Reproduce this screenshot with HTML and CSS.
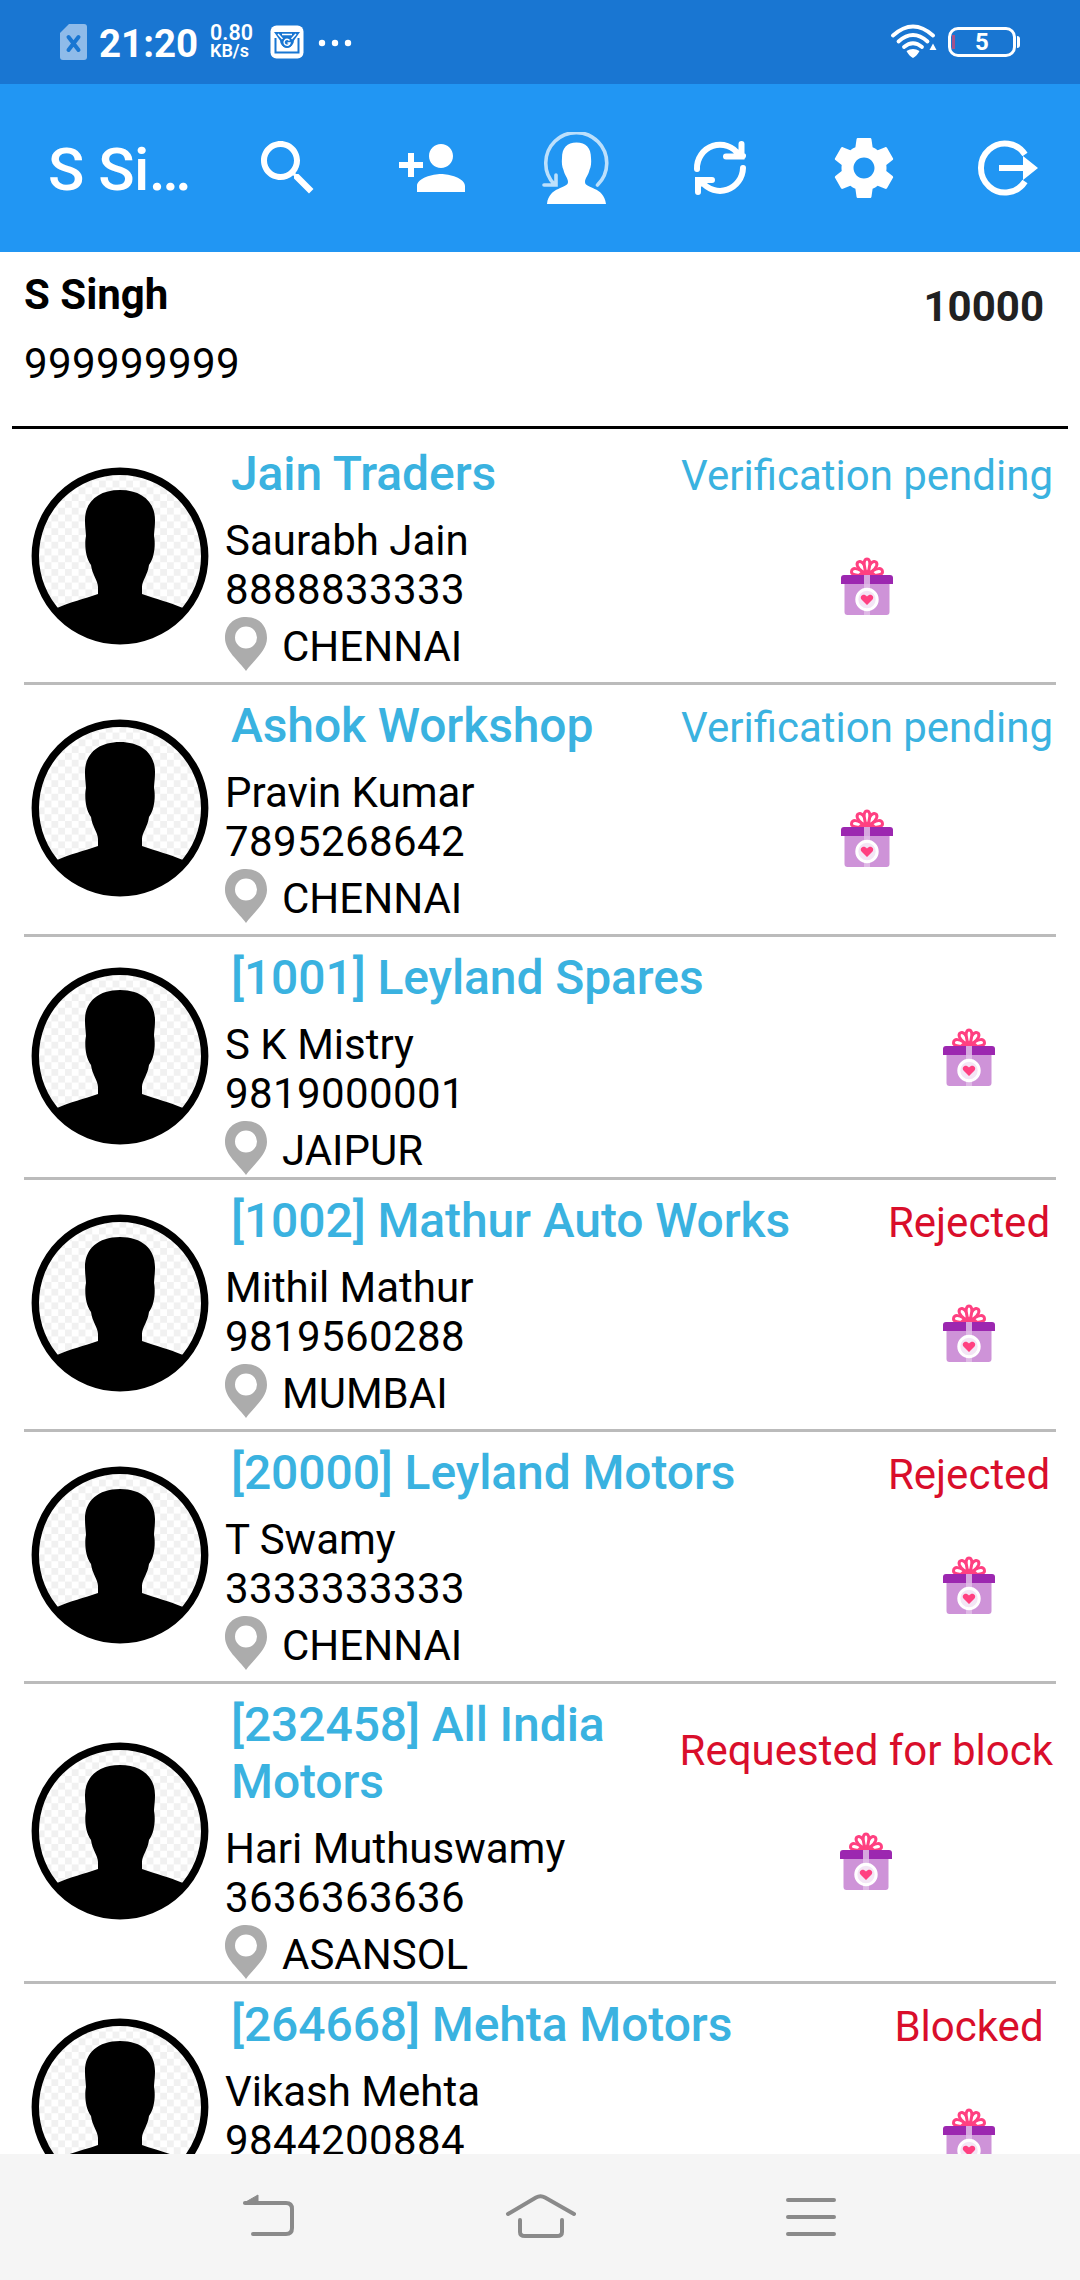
FILE: index.html
```
<!DOCTYPE html>
<html lang="en">
<head>
  <meta charset="UTF-8" />
  <meta name="viewport" content="width=device-width, initial-scale=1.0"/>
  <title>S Singh</title>
  <link rel="stylesheet" href="styles.css">
</head>
<body>
  <!-- shared icons -->
  <svg class="sprite" aria-hidden="true">
    <defs>
      <pattern id="checks" width="13.6" height="13.6" patternUnits="userSpaceOnUse">
        <rect width="6.8" height="6.8" fill="#f1f1f1"/>
        <rect x="6.8" y="6.8" width="6.8" height="6.8" fill="#f1f1f1"/>
      </pattern>
      <clipPath id="round"><circle cx="89" cy="89" r="86"/></clipPath>
    </defs>

    <symbol id="avatar" viewBox="0 0 178 178">
      <circle cx="89" cy="89" r="84.7" fill="#fff"/>
      <circle cx="89" cy="89" r="84.7" fill="url(#checks)"/>
      <path clip-path="url(#round)" d="M89 23C111 23 124 35 124 53C124 60 123.200 64 123 69C124.500 76 124 90 118 98C117 107 111 114 111 120V127C125 132 138 135 152 141V178H26V141C39 135 53 132 67 127V120C67 114 61 107 60 98C54 90 53.500 76 55 69C54.800 64 54 60 54 53C54 35 67 23 89 23Z"/>
      <circle cx="89" cy="89" r="84.700" fill="none" stroke="#000" stroke-width="7.400"/>
    </symbol>

    <symbol id="pin" viewBox="0 0 42 54">
      <path fill="#acacac" fill-rule="evenodd" d="M21 0C9 0 0 8 0 21C0 34 14 44 21 54C28 44 42 34 42 21C42 8 33 0 21 0ZM21 9.500A11 11 0 1 1 21 31.500A11 11 0 1 1 21 9.500Z"/>
    </symbol>

    <symbol id="gift" viewBox="0 0 60 60">
      <g fill="#fff" stroke="#ff4081" stroke-width="3">
        <path d="M30 20C24 19 14.500 20 14.500 16C14.500 11.500 20 10.500 30 19Z"/>
        <path d="M30 20C36 19 45.500 20 45.500 16C45.500 11.500 40 10.500 30 19Z"/>
        <path d="M30 19C24 15 18.500 10 20.500 6.500C23.500 3 29 8 30 19Z"/>
        <path d="M30 19C36 15 41.500 10 39.500 6.500C36.500 3 31 8 30 19Z"/>
        <path d="M30 19C27 12 25.500 3 30 3C34.500 3 33 12 30 19Z"/>
      </g>
      <path fill="#ff4081" d="M20 19.500L25 14.500H35L40 19.500Z"/>
      <path fill="#ce93d8" d="M7.500 26H52.500V56A3 3 0 0 1 49.500 59H10.500A3 3 0 0 1 7.500 56Z"/>
      <path fill="#9c27b0" d="M4 28V22A3 3 0 0 1 7 19H53A3 3 0 0 1 56 22V28Z"/>
      <path fill="#e1bee7" opacity=".85" d="M27 19H33V59H27Z"/>
      <circle cx="30" cy="43.500" r="10.200" fill="#f3e5f5" stroke="#fff" stroke-width="3"/>
      <path fill="#ff4081" d="M30 49L24.500 43.500C22 40.500 26.500 36.500 30 40.500C33.500 36.500 38 40.500 35.500 43.500Z"/>
    </symbol>
  </svg>

  <div class="statusbar">
    <div class="status-left">
      <svg class="sim" viewBox="0 0 27 36">
        <path fill="#8fbbe9" d="M9 0H24A3 3 0 0 1 27 3V33A3 3 0 0 1 24 36H3A3 3 0 0 1 0 33V9Z"/>
        <path stroke="#1976d2" stroke-width="4" stroke-linecap="round" d="M8.500 13L18.500 26M18.500 13L8.500 26"/>
      </svg>
      <span class="clock">21:20</span>
      <span class="speed"><span>0.80</span><small>KB/s</small></span>
      <svg class="mail" viewBox="0 0 34 34">
        <rect x=".5" y=".5" width="33" height="33" rx="6" fill="#fff"/>
        <path fill="#1976d2" d="M4 7H30L24 15.500A7 7 0 0 1 10 15.500Z"/>
        <path fill="none" stroke="#1976d2" stroke-width="2" d="M5.500 13V27.500H28.500V13"/>
        <path fill="none" stroke="#fff" stroke-width="1.500" d="M8 9L12.500 14M26 9L21.500 14M12 9.500H22"/>
        <circle cx="17" cy="17.500" r="5.500" fill="#1976d2"/>
        <path fill="none" stroke="#fff" stroke-width="1.400" d="M19.500 15.500A3 3 0 1 0 20 18H17.500"/>
      </svg>
      <svg class="dots" viewBox="0 0 34 8"><circle cx="4" cy="4" r="3.200"/><circle cx="17" cy="4" r="3.200"/><circle cx="30" cy="4" r="3.200"/></svg>
    </div>
    <div class="status-right">
      <svg class="wifi" viewBox="0 0 48 36">
        <g fill="none" stroke="#fff" stroke-width="3.800" stroke-linecap="round">
          <path d="M3 11.500Q23 -6.500 43 11.500"/>
          <path d="M8.500 17.500Q23 4.500 37.500 17.500"/>
          <path d="M14 23Q23 15.500 32 23"/>
        </g>
        <path fill="#fff" d="M16.500 27Q23 23 29.500 27Q27 32 23 34Q19 32 16.500 27ZM39.500 26L43 19.500L46.500 26Z"/>
      </svg>
      <div class="battery"><i class="level"></i>5</div>
    </div>
  </div>

  <div class="appbar">
    <h1>S Si…</h1>
    <div class="tool">
      <svg viewBox="0 0 24 24"><path d="M15.500 14h-.79l-.28-.27C15.410 12.590 16 11.110 16 9.500 16 5.910 13.090 3 9.500 3S3 5.910 3 9.500 5.910 16 9.500 16c1.610 0 3.090-.59 4.230-1.570l.27.28v.79l5 4.990L20.490 19l-4.990-5zm-6 0C7.010 14 5 11.990 5 9.500S7.010 5 9.500 5 14 7.010 14 9.500 11.990 14 9.500 14z"/></svg>
    </div>
    <div class="tool">
      <svg viewBox="0 0 24 24"><path d="M15 12c2.210 0 4-1.790 4-4s-1.790-4-4-4-4 1.790-4 4 1.790 4 4 4zm-9-2V7H4v3H1v2h3v3h2v-3h3v-2H6zm9 4c-2.670 0-8 1.340-8 4v2h16v-2c0-2.660-5.330-4-8-4z"/></svg>
    </div>
    <div class="tool">
      <svg viewBox="0 0 72 72">
        <path d="M36.500 10.500C46 10.500 51 16 51 26C51.500 30 51 35 49.500 38C48.500 43 45 46 45 50C45 57 64 54 66 72H7C9 54 28 57 28 50C28 46 24.500 43 23.500 38C22 35 21.500 30 22 26C22 16 27 10.500 36.500 10.500Z"/>
        <path class="thin" d="M14.500 52.500A30.500 30.500 0 1 1 57.500 53M4 53H16V43"/>
      </svg>
    </div>
    <div class="tool">
      <svg viewBox="0 0 72 72"><path class="stroke" d="M13 37A23 23.500 0 0 1 55 23L59 24M57.500 12V24.500H42M59 36A23 23.500 0 0 1 18 50M14 60V48H28"/><path d="M47 25L58 15V25ZM14 47V58L25 47Z"/></svg>
    </div>
    <div class="tool">
      <svg viewBox="0 0 24 24"><path d="M19.430 12.980c.04-.32.070-.64.070-.98s-.03-.66-.07-.98l2.110-1.650c.19-.15.240-.42.120-.64l-2-3.460c-.12-.22-.39-.3-.61-.22l-2.490 1c-.52-.4-1.080-.73-1.690-.98l-.38-2.650C14.460 2.180 14.250 2 14 2h-4c-.25 0-.46.180-.49.420l-.38 2.650c-.61.250-1.170.590-1.690.980l-2.490-1c-.23-.09-.49 0-.61.220l-2 3.460c-.13.220-.07.490.120.640l2.110 1.650c-.04.320-.07.650-.07.980s.03.660.070.980l-2.110 1.650c-.19.150-.24.420-.12.640l2 3.460c.12.220.390.300.610.220l2.490-1c.52.400 1.080.730 1.690.980l.38 2.650c.03.240.240.420.490.420h4c.25 0 .46-.18.490-.42l.38-2.650c.61-.25 1.170-.59 1.690-.98l2.490 1c.23.090.490 0 .61-.22l2-3.460c.12-.22.070-.49-.12-.64l-2.110-1.650zM12 15.500c-1.930 0-3.500-1.570-3.500-3.500s1.570-3.500 3.500-3.500 3.500 1.570 3.500 3.500-1.570 3.500-3.500 3.500z"/></svg>
    </div>
    <div class="tool">
      <svg viewBox="0 0 72 72"><path class="stroke butt" d="M53 22.500A24 24.500 0 1 0 53 49.500"/><path d="M27 33H51V24L66 36L51 48V39H27Z"/></svg>
    </div>
  </div>

  <div class="user">
    <div>
      <div class="user-name">S Singh</div>
      <div class="user-phone phone">999999999</div>
    </div>
    <div class="points">10000</div>
  </div>

  <div class="list">
    <div class="row">
      <svg class="avatar"><use href="#avatar"/></svg>
      <div class="info">
        <h2>Jain Traders</h2>
        <p>Saurabh Jain</p>
        <p class="phone">8888833333</p>
        <div class="city"><svg><use href="#pin"/></svg>CHENNAI</div>
      </div>
      <div class="side">
        <span class="state pending">Verification pending</span>
        <svg class="gift"><use href="#gift"/></svg>
      </div>
    </div>

    <div class="row">
      <svg class="avatar"><use href="#avatar"/></svg>
      <div class="info">
        <h2>Ashok Workshop</h2>
        <p>Pravin Kumar</p>
        <p class="phone">7895268642</p>
        <div class="city"><svg><use href="#pin"/></svg>CHENNAI</div>
      </div>
      <div class="side">
        <span class="state pending">Verification pending</span>
        <svg class="gift"><use href="#gift"/></svg>
      </div>
    </div>

    <div class="row">
      <svg class="avatar"><use href="#avatar"/></svg>
      <div class="info">
        <h2>[1001] Leyland Spares</h2>
        <p>S K Mistry</p>
        <p class="phone">9819000001</p>
        <div class="city"><svg><use href="#pin"/></svg>JAIPUR</div>
      </div>
      <div class="side">
        <svg class="gift"><use href="#gift"/></svg>
      </div>
    </div>

    <div class="row">
      <svg class="avatar"><use href="#avatar"/></svg>
      <div class="info">
        <h2>[1002] Mathur Auto Works</h2>
        <p>Mithil Mathur</p>
        <p class="phone">9819560288</p>
        <div class="city"><svg><use href="#pin"/></svg>MUMBAI</div>
      </div>
      <div class="side">
        <span class="state">Rejected</span>
        <svg class="gift"><use href="#gift"/></svg>
      </div>
    </div>

    <div class="row">
      <svg class="avatar"><use href="#avatar"/></svg>
      <div class="info">
        <h2>[20000] Leyland Motors</h2>
        <p>T Swamy</p>
        <p class="phone">3333333333</p>
        <div class="city"><svg><use href="#pin"/></svg>CHENNAI</div>
      </div>
      <div class="side">
        <span class="state">Rejected</span>
        <svg class="gift"><use href="#gift"/></svg>
      </div>
    </div>

    <div class="row">
      <svg class="avatar"><use href="#avatar"/></svg>
      <div class="info">
        <h2>[232458] All India Motors</h2>
        <p>Hari Muthuswamy</p>
        <p class="phone">3636363636</p>
        <div class="city"><svg><use href="#pin"/></svg>ASANSOL</div>
      </div>
      <div class="side">
        <span class="state">Requested for block</span>
        <svg class="gift"><use href="#gift"/></svg>
      </div>
    </div>

    <div class="row">
      <svg class="avatar"><use href="#avatar"/></svg>
      <div class="info">
        <h2>[264668] Mehta Motors</h2>
        <p>Vikash Mehta</p>
        <p class="phone">9844200884</p>
      </div>
      <div class="side">
        <span class="state">Blocked</span>
        <svg class="gift"><use href="#gift"/></svg>
      </div>
    </div>
  </div>

  <div class="navbar">
    <svg viewBox="0 0 72 60"><path d="M18 12H52Q58 12 58 18V37Q58 43 52 43H19"/><path class="fill" d="M10 12L24 4V12Z"/><path d="M11 12H20"/></svg>
    <svg viewBox="0 0 72 60"><path d="M4 23L32 6.500Q36.500 4 41 6.500L70 23M16 29V41Q16 45 21 45H53Q58 45 58 41V29"/></svg>
    <svg viewBox="0 0 72 60"><path d="M14 9H60M14 26H60M14 43H60"/></svg>
  </div>
</body>
</html>
```
FILE: styles.css
```
* {
  box-sizing: border-box;
}

body {
  margin: 0;
  height: 2280px;
  display: flex;
  flex-direction: column;
  overflow: hidden;
  font-family: Roboto, sans-serif;
  font-size: 42px;
  line-height: 49px;
  color: #000;
  background: #fff;
}

h1, h2, p {
  margin: 0;
}

svg {
  display: block;
  flex: none;
}

.sprite {
  position: absolute;
  width: 0;
  height: 0;
}

/* status bar */
.statusbar {
  height: 84px;
  flex: none;
  display: flex;
  justify-content: space-between;
  padding: 0 60px;
  background: #1976d2;
  color: #fff;
}

.status-left, .status-right {
  display: flex;
  align-items: center;
}

.sim {
  width: 27px;
  height: 36px;
}

.clock {
  margin: 2px 0 0 12px;
  width: 99px;
  font-size: 38.5px;
  font-weight: 700;
}

.speed {
  display: flex;
  flex-direction: column;
  width: 60px;
  margin-left: 12px;
  font-size: 21.5px;
  font-weight: 600;
  line-height: 18px;
}

.speed small {
  font-size: 18px;
}

.mail {
  width: 34px;
  height: 34px;
}

.dots {
  width: 34px;
  height: 8px;
  margin: 2px 0 0 14px;
  fill: #fff;
}

.wifi {
  width: 48px;
  height: 36px;
}

.battery {
  position: relative;
  width: 68px;
  height: 30px;
  margin: 0 4px 0 10px;
  border: 3px solid #fff;
  border-radius: 10px;
  font-size: 24px;
  font-weight: 700;
  line-height: 25px;
  text-align: center;
}

.battery::after {
  content: "";
  position: absolute;
  right: -7px;
  top: 6px;
  width: 3px;
  height: 12px;
  border-radius: 0 3px 3px 0;
  background: #fff;
}

.level {
  position: absolute;
  left: 1px;
  top: 5px;
  width: 3px;
  height: 14px;
  background: #a4528a;
}

/* app bar */
.appbar {
  height: 168px;
  flex: none;
  display: flex;
  align-items: center;
  background: #2196f3;
  color: #fff;
}

.appbar h1 {
  width: 216px;
  padding: 3px 0 0 48px;
  font-size: 60px;
  font-weight: 500;
  line-height: 70px;
  letter-spacing: -0.5px;
  white-space: nowrap;
}

.tool {
  width: 144px;
  display: flex;
  justify-content: center;
}

.tool svg {
  width: 72px;
  height: 72px;
  fill: #fff;
}

.tool .stroke, .tool .thin {
  fill: none;
  stroke: #fff;
  stroke-width: 6;
  stroke-linecap: round;
}

.tool .butt {
  stroke-linecap: butt;
}

.tool .thin {
  stroke-width: 3.6;
  stroke-opacity: 0.7;
}

/* logged in user */
.user {
  height: 177px;
  flex: none;
  display: flex;
  justify-content: space-between;
  margin: 0 12px;
  padding: 18px 24px 0 12px;
  border-bottom: 3px solid #000;
}

.user-name {
  font-weight: 700;
}

.user-phone {
  margin-top: 20px;
}

.phone {
  letter-spacing: 0.4px;
}

.points {
  padding-top: 12px;
  font-weight: 700;
  color: #212121;
}

/* customers */
.list {
  flex: 1;
  min-height: 0;
  overflow: hidden;
  padding: 4px 24px 0;
}

.row {
  display: flex;
  align-items: stretch;
  border-bottom: 3px solid #bbb;
}

.avatar {
  width: 178px;
  height: 178px;
  margin: 0 16px 3px 7px;
  align-self: center;
}

.info {
  flex: 1;
  padding: 12px 0 2px;
}

.info h2 {
  padding-left: 6px;
  margin-bottom: 14px;
  font-size: 48px;
  font-weight: 500;
  line-height: 57px;
  letter-spacing: -0.1px;
  color: #3ab2e0;
}

.city {
  display: flex;
  margin-top: 3px;
  line-height: 60px;
  height: 54px;
}

.city svg {
  width: 42px;
  height: 54px;
  margin-right: 15px;
}

.side {
  min-width: 174px;
  display: flex;
  flex-direction: column;
  align-items: center;
  justify-content: center;
}

.state {
  padding: 18px 3px 0;
  white-space: nowrap;
  color: #d90e2b;
}

.pending {
  color: #3ab2e0;
}

.gift {
  width: 60px;
  height: 60px;
  margin: 57px 0;
}

.state + .gift {
  margin: 56px 0 66px;
}

/* system navigation */
.navbar {
  height: 126px;
  flex: none;
  display: flex;
  justify-content: space-between;
  padding: 37px 234px 0;
  background: #f5f5f5;
}

.navbar svg {
  width: 72px;
  height: 60px;
  fill: none;
  stroke: #8a8a8a;
  stroke-width: 4;
  stroke-linecap: round;
}

.navbar .fill {
  fill: #8a8a8a;
  stroke-width: 1;
}
```
